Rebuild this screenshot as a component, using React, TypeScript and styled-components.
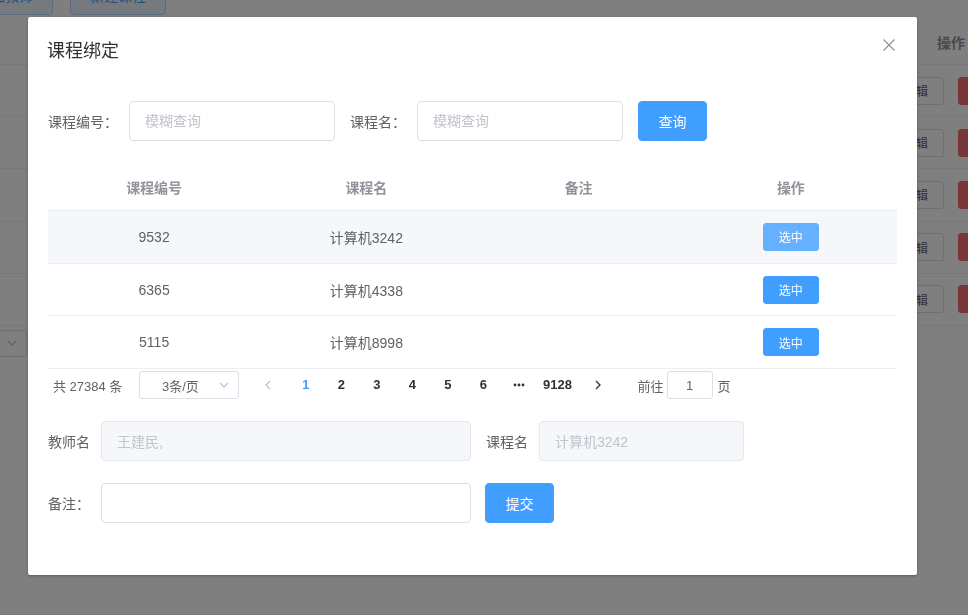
import React from "react";
import styled, { createGlobalStyle } from "styled-components";

const GlobalStyle = createGlobalStyle`
  html, body {
    margin: 0;
    padding: 0;
    width: 100%;
    height: 100%;
    overflow: hidden;
    background: #fff;
  }
  body {
    font-family: "Liberation Sans", "Noto Sans CJK SC", sans-serif;
    font-size: 14px;
    color: #606266;
  }
  * {
    box-sizing: border-box;
  }
`;

/* ---------- page behind the dialog ---------- */

const Page = styled.div`
  width: 1031px;
`;

const Toolbar = styled.div`
  display: flex;
  gap: 17px;
  height: 40px;
  margin: -25px 0 0 -43px;
`;

const PlainButton = styled.button`
  width: 96px;
  height: 40px;
  border: 1px solid #b3d8ff;
  border-radius: 4px;
  background: #ecf5ff;
  color: #409eff;
  font: 14px "Liberation Sans", "Noto Sans CJK SC", sans-serif;
`;

const BgRow = styled.div<{ $head?: boolean }>`
  display: grid;
  grid-template-columns: 1fr 160px;
  height: ${(p) => (p.$head ? 50 : 52.2)}px;
  border-bottom: 1px solid #ebeef5;
  align-items: center;
`;

const BgHeadCell = styled.div`
  text-align: center;
  font-weight: 700;
  color: #909399;
  padding-top: 4px;
`;

const BgActions = styled.div`
  display: flex;
  justify-content: center;
  gap: 14px;
`;

const MiniButton = styled.button<{ $kind: "default" | "danger" | "primary" | "hover" }>`
  width: 56px;
  height: 28px;
  border-radius: 3px;
  font: 12px "Liberation Sans", "Noto Sans CJK SC", sans-serif;
  border: 1px solid
    ${(p) =>
      p.$kind === "default" ? "#dcdfe6" : p.$kind === "danger" ? "#f56c6c" : p.$kind === "hover" ? "#66b1ff" : "#409eff"};
  background: ${(p) =>
    p.$kind === "default" ? "#fff" : p.$kind === "danger" ? "#f56c6c" : p.$kind === "hover" ? "#66b1ff" : "#409eff"};
  color: ${(p) => (p.$kind === "default" ? "#606266" : "#fff")};
  padding: 0;
`;

const BgPager = styled.div`
  padding-top: 4px;
`;

const BgSelect = styled.div`
  width: 97px;
  height: 27px;
  margin-left: -70px;
  border: 1px solid #dcdfe6;
  border-radius: 3px;
  display: flex;
  align-items: center;
  justify-content: flex-end;
  padding-right: 8px;
`;

/* ---------- dialog ---------- */

const Overlay = styled.div`
  position: fixed;
  inset: 0;
  background: rgba(0, 0, 0, 0.5);
`;

const Dialog = styled.div`
  width: 889px;
  margin: 17px 0 0 28px;
  background: #fff;
  border-radius: 2px;
  box-shadow: 0 1px 3px rgba(0, 0, 0, 0.3);
`;

const DialogHeader = styled.div`
  display: flex;
  justify-content: space-between;
  align-items: flex-start;
  padding: 20px 20px 10px;
`;

const Title = styled.span`
  font-size: 18px;
  line-height: 24px;
  color: #303133;
  margin-left: -1px;
  font-family: "Noto Sans CJK SC", sans-serif;
`;

const CloseButton = styled.button`
  width: 16px;
  height: 16px;
  padding: 0;
  border: none;
  background: none;
  display: flex;
`;

const DialogBody = styled.div`
  padding: 30px 20px 30px;
`;

const FormLine = styled.div<{ $mt?: number }>`
  display: flex;
  align-items: center;
  height: 40px;
  margin-top: ${(p) => p.$mt ?? 0}px;
  margin-bottom: 22px;
`;

const FormItem = styled.div<{ $mr?: number }>`
  display: flex;
  align-items: center;
  margin-right: ${(p) => p.$mr ?? 15}px;
`;

const Label = styled.label`
  padding-right: 11px;
  line-height: 40px;
  color: #606266;
  font-size: 14px;
  font-family: "Noto Sans CJK SC", sans-serif;
`;

const Input = styled.input<{ $w: number }>`
  width: ${(p) => p.$w}px;
  height: 40px;
  padding: 0 15px;
  border: 1px solid #dcdfe6;
  border-radius: 4px;
  background: #fff;
  color: #606266;
  font: 14px "Liberation Sans", "Noto Sans CJK SC", sans-serif;
  outline: none;

  &::placeholder {
    color: #c0c4cc;
  }

  &:disabled {
    background: #f5f7fa;
    border-color: #e4e7ed;
    color: #c0c4cc;
  }
`;

const PrimaryButton = styled.button`
  width: 69px;
  height: 40px;
  border: 1px solid #409eff;
  border-radius: 4px;
  background: #409eff;
  color: #fff;
  font: 14px "Noto Sans CJK SC", sans-serif;
  padding: 0;
`;

const Table = styled.div`
  font-size: 14px;
`;

const TableRow = styled.div<{ $head?: boolean; $hover?: boolean }>`
  display: grid;
  grid-template-columns: repeat(4, 1fr);
  align-items: center;
  height: ${(p) => (p.$head ? 48 : 52.7)}px;
  border-bottom: 1px solid #ebeef5;
  background: ${(p) => (p.$hover ? "#f5f7fa" : "#fff")};
  color: ${(p) => (p.$head ? "#909399" : "#606266")};
  font-weight: ${(p) => (p.$head ? 700 : 400)};
`;

const Cell = styled.div`
  display: flex;
  justify-content: center;
  align-items: center;
`;

const Pagination = styled.div`
  display: flex;
  align-items: center;
  height: 32px;
  padding: 2px 5px;
  font-size: 13px;
  color: #303133;
`;

const Total = styled.span`
  width: 86px;
  color: #606266;
`;

const SizeSelect = styled.div`
  width: 100px;
  height: 28px;
  border: 1px solid #dcdfe6;
  border-radius: 3px;
  display: flex;
  align-items: center;
  padding: 0 8px 0 22px;
  justify-content: space-between;
  color: #606266;
`;

const NavButton = styled.span<{ $w: number; $ml?: number }>`
  width: ${(p) => p.$w}px;
  margin-left: ${(p) => p.$ml ?? 0}px;
  height: 28px;
  display: flex;
  align-items: center;
  justify-content: center;
`;

const PageItem = styled.span<{ $active?: boolean; $w?: number }>`
  width: ${(p) => p.$w ?? 35.5}px;
  height: 28px;
  line-height: 28px;
  text-align: center;
  font-weight: 700;
  color: ${(p) => (p.$active ? "#409eff" : "#303133")};
  display: flex;
  align-items: center;
  justify-content: center;
`;

const Jumper = styled.span`
  display: flex;
  align-items: center;
  margin-left: 21px;
  color: #606266;
`;

const JumpInput = styled.span`
  width: 46px;
  height: 28px;
  margin: 0 5px 0 3px;
  border: 1px solid #dcdfe6;
  border-radius: 3px;
  display: flex;
  align-items: center;
  justify-content: center;
`;

const Chevron = ({ dir, color }: { dir: "left" | "right" | "down"; color: string }) => {
  const d = dir === "left" ? "M8 2 L4 6 L8 10" : dir === "right" ? "M4 2 L8 6 L4 10" : "M2 4 L6 8 L10 4";
  return (
    <svg width="12" height="12" viewBox="0 0 12 12">
      <path d={d} fill="none" stroke={color} strokeWidth="1.3" />
    </svg>
  );
};

const rows = [
  { id: "9532", name: "计算机3242" },
  { id: "6365", name: "计算机4338" },
  { id: "5115", name: "计算机8998" },
];

export default function App() {
  return (
    <>
      <GlobalStyle />
      <Page>
        <Toolbar>
          <PlainButton>添加教师</PlainButton>
          <PlainButton>新建课程</PlainButton>
        </Toolbar>
        <BgRow $head>
          <div />
          <BgHeadCell>操作</BgHeadCell>
        </BgRow>
        {[0, 1, 2, 3, 4].map((i) => (
          <BgRow key={i}>
            <div />
            <BgActions>
              <MiniButton $kind="default">编辑</MiniButton>
              <MiniButton $kind="danger">删除</MiniButton>
            </BgActions>
          </BgRow>
        ))}
        <BgPager>
          <BgSelect>
            <Chevron dir="down" color="#c0c4cc" />
          </BgSelect>
        </BgPager>
      </Page>

      <Overlay>
        <Dialog>
          <DialogHeader>
            <Title>课程绑定</Title>
            <CloseButton aria-label="close">
              <svg width="16" height="16" viewBox="0 0 16 16">
                <path d="M2.5 2.5 L13.5 13.5 M13.5 2.5 L2.5 13.5" stroke="#909399" strokeWidth="1.2" />
              </svg>
            </CloseButton>
          </DialogHeader>
          <DialogBody>
            <FormLine>
              <FormItem>
                <Label>课程编号：</Label>
                <Input $w={206} placeholder="模糊查询" />
              </FormItem>
              <FormItem>
                <Label>课程名：</Label>
                <Input $w={206} placeholder="模糊查询" />
              </FormItem>
              <PrimaryButton>查询</PrimaryButton>
            </FormLine>

            <Table>
              <TableRow $head>
                <Cell>课程编号</Cell>
                <Cell>课程名</Cell>
                <Cell>备注</Cell>
                <Cell>操作</Cell>
              </TableRow>
              {rows.map((r, i) => (
                <TableRow key={r.id} $hover={i === 0}>
                  <Cell>{r.id}</Cell>
                  <Cell>{r.name}</Cell>
                  <Cell />
                  <Cell>
                    <MiniButton $kind={i === 0 ? "hover" : "primary"}>选中</MiniButton>
                  </Cell>
                </TableRow>
              ))}
            </Table>

            <Pagination>
              <Total>共 27384 条</Total>
              <SizeSelect>
                <span>3条/页</span>
                <Chevron dir="down" color="#c0c4cc" />
              </SizeSelect>
              <NavButton $w={40} $ml={9}>
                <Chevron dir="left" color="#c0c4cc" />
              </NavButton>
              <PageItem $active>1</PageItem>
              <PageItem>2</PageItem>
              <PageItem>3</PageItem>
              <PageItem>4</PageItem>
              <PageItem>5</PageItem>
              <PageItem>6</PageItem>
              <PageItem>
                <svg width="12" height="4" viewBox="0 0 12 4">
                  <circle cx="2" cy="2" r="1.4" fill="#303133" />
                  <circle cx="6" cy="2" r="1.4" fill="#303133" />
                  <circle cx="10" cy="2" r="1.4" fill="#303133" />
                </svg>
              </PageItem>
              <PageItem $w={42}>9128</PageItem>
              <NavButton $w={38}>
                <Chevron dir="right" color="#303133" />
              </NavButton>
              <Jumper>
                前往
                <JumpInput>1</JumpInput>页
              </Jumper>
            </Pagination>

            <FormLine $mt={20}>
              <FormItem>
                <Label>教师名</Label>
                <Input $w={370} disabled value="王建民," readOnly />
              </FormItem>
              <FormItem>
                <Label>课程名</Label>
                <Input $w={205} disabled value="计算机3242" readOnly />
              </FormItem>
            </FormLine>
            <FormLine $mt={1}>
              <FormItem $mr={14}>
                <Label>备注：</Label>
                <Input $w={370} />
              </FormItem>
              <PrimaryButton>提交</PrimaryButton>
            </FormLine>
          </DialogBody>
        </Dialog>
      </Overlay>
    </>
  );
}
